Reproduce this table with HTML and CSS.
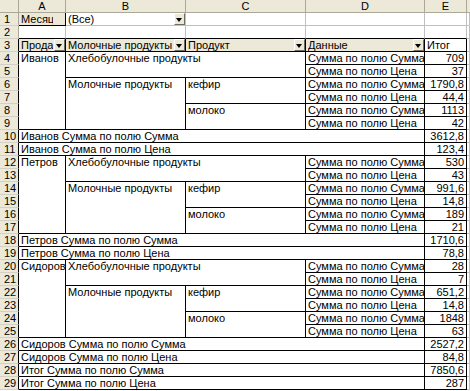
FILE: index.html
```html
<!DOCTYPE html>
<html lang="ru">
<head>
<meta charset="utf-8">
<title>Сводная таблица</title>
<link rel="stylesheet" href="styles.css">
</head>
<body>
<table class="sheet">
<colgroup><col class="w-h"><col class="w-a"><col class="w-b"><col class="w-c"><col class="w-d"><col class="w-e"><col class="w-f"></colgroup>
<tr class="colhdr"><th class="corner"></th><th>A</th><th>B</th><th>C</th><th>D</th><th>E</th><th class="cut"></th></tr>
<tr><th class="rh">1</th><td class="fbtn"><span class="lbl">Месяц</span></td><td class="page"><span class="lbl">(Все)</span><span class="dd"></span></td><td></td><td></td><td></td><td></td></tr>
<tr><th class="rh">2</th><td class="top"></td><td class="top"></td><td class="top"></td><td class="top"></td><td class="top"></td><td></td></tr>
<tr><th class="rh pv">3</th><td class="fbtn hb"><span class="lbl">Продавец</span><span class="dd"></span></td><td class="fbtn hb"><span class="lbl">Молочные продукты</span><span class="dd"></span></td><td class="fbtn hb"><span class="lbl">Продукт</span><span class="dd"></span></td><td class="fbtn hb"><span class="lbl">Данные</span><span class="dd"></span></td><td class="p hb">Итог</td><td></td></tr>

<tr><th class="rh pv">4</th><td class="p grp" rowspan="6">Иванов</td><td class="p grp" rowspan="2" colspan="2">Хлебобулочные продукты</td><td class="p d1">Сумма по полю Сумма</td><td class="p n d1">709</td><td></td></tr>
<tr><th class="rh pv">5</th><td class="p">Сумма по полю Цена</td><td class="p n">37</td><td></td></tr>
<tr><th class="rh pv">6</th><td class="p grp" rowspan="4">Молочные продукты</td><td class="p grp" rowspan="2">кефир</td><td class="p d1">Сумма по полю Сумма</td><td class="p n d1">1790,8</td><td></td></tr>
<tr><th class="rh pv">7</th><td class="p">Сумма по полю Цена</td><td class="p n">44,4</td><td></td></tr>
<tr><th class="rh pv">8</th><td class="p grp" rowspan="2">молоко</td><td class="p d1">Сумма по полю Сумма</td><td class="p n d1">1113</td><td></td></tr>
<tr><th class="rh pv">9</th><td class="p">Сумма по полю Цена</td><td class="p n">42</td><td></td></tr>
<tr><th class="rh pv">10</th><td class="p" colspan="4">Иванов Сумма по полю Сумма</td><td class="p n">3612,8</td><td></td></tr>
<tr><th class="rh pv">11</th><td class="p" colspan="4">Иванов Сумма по полю Цена</td><td class="p n">123,4</td><td></td></tr>

<tr><th class="rh pv">12</th><td class="p grp" rowspan="6">Петров</td><td class="p grp" rowspan="2" colspan="2">Хлебобулочные продукты</td><td class="p d1">Сумма по полю Сумма</td><td class="p n d1">530</td><td></td></tr>
<tr><th class="rh pv">13</th><td class="p">Сумма по полю Цена</td><td class="p n">43</td><td></td></tr>
<tr><th class="rh pv">14</th><td class="p grp" rowspan="4">Молочные продукты</td><td class="p grp" rowspan="2">кефир</td><td class="p d1">Сумма по полю Сумма</td><td class="p n d1">991,6</td><td></td></tr>
<tr><th class="rh pv">15</th><td class="p">Сумма по полю Цена</td><td class="p n">14,8</td><td></td></tr>
<tr><th class="rh pv">16</th><td class="p grp" rowspan="2">молоко</td><td class="p d1">Сумма по полю Сумма</td><td class="p n d1">189</td><td></td></tr>
<tr><th class="rh pv">17</th><td class="p">Сумма по полю Цена</td><td class="p n">21</td><td></td></tr>
<tr><th class="rh pv">18</th><td class="p" colspan="4">Петров Сумма по полю Сумма</td><td class="p n">1710,6</td><td></td></tr>
<tr><th class="rh pv">19</th><td class="p" colspan="4">Петров Сумма по полю Цена</td><td class="p n">78,8</td><td></td></tr>

<tr><th class="rh pv">20</th><td class="p grp" rowspan="6">Сидоров</td><td class="p grp" rowspan="2" colspan="2">Хлебобулочные продукты</td><td class="p d1">Сумма по полю Сумма</td><td class="p n d1">28</td><td></td></tr>
<tr><th class="rh pv">21</th><td class="p">Сумма по полю Цена</td><td class="p n">7</td><td></td></tr>
<tr><th class="rh pv">22</th><td class="p grp" rowspan="4">Молочные продукты</td><td class="p grp" rowspan="2">кефир</td><td class="p d1">Сумма по полю Сумма</td><td class="p n d1">651,2</td><td></td></tr>
<tr><th class="rh pv">23</th><td class="p">Сумма по полю Цена</td><td class="p n">14,8</td><td></td></tr>
<tr><th class="rh pv">24</th><td class="p grp" rowspan="2">молоко</td><td class="p d1">Сумма по полю Сумма</td><td class="p n d1">1848</td><td></td></tr>
<tr><th class="rh pv">25</th><td class="p">Сумма по полю Цена</td><td class="p n">63</td><td></td></tr>
<tr><th class="rh pv">26</th><td class="p" colspan="4">Сидоров Сумма по полю Сумма</td><td class="p n">2527,2</td><td></td></tr>
<tr><th class="rh pv">27</th><td class="p" colspan="4">Сидоров Сумма по полю Цена</td><td class="p n">84,8</td><td></td></tr>
<tr><th class="rh pv">28</th><td class="p" colspan="4">Итог Сумма по полю Сумма</td><td class="p n">7850,6</td><td></td></tr>
<tr><th class="rh pv">29</th><td class="p" colspan="4">Итог Сумма по полю Цена</td><td class="p n">287</td><td></td></tr>
</table>
</body>
</html>
```

FILE: styles.css
```css
html, body {
  margin: 0;
  padding: 0;
  background: #ffffff;
}

.sheet {
  border-collapse: separate;
  border-spacing: 0;
  table-layout: fixed;
  width: 470px;
  font-family: "Liberation Sans", Arial, sans-serif;
  font-size: 11px;
  color: #000;
}

.w-h { width: 19px; }
.w-a { width: 47px; }
.w-b { width: 120px; }
.w-c { width: 120px; }
.w-d { width: 119px; }
.w-e { width: 42px; }
.w-f { width: 3px; }

.sheet td,
.sheet th {
  box-sizing: border-box;
  height: 13px;
  padding: 0 1px 0 2px;
  line-height: 12px;
  white-space: nowrap;
  overflow: hidden;
  text-align: left;
  vertical-align: bottom;
  font-weight: normal;
  border-right: 1px solid #c0c0c0;
  border-bottom: 1px solid #c0c0c0;
}

/* column and row headers */
.colhdr th {
  background: #ece9d8;
  text-align: center;
  border-right: 1px solid #aca899;
  border-bottom: 1px solid #aca899;
  padding: 0;
}
.colhdr th.cut { border-right: none; }

.sheet th.rh {
  background: #ece9d8;
  text-align: left;
  padding-left: 4px;
  border-right: 1px solid #aca899;
  border-bottom: 1px solid #d4d0c8;
}
.sheet th.rh.pv { border-right-color: #000; }

/* pivot area */
.sheet td.top { border-bottom-color: #000; }

.sheet td.p {
  background: #fff;
  border-right-color: #000;
  border-bottom-color: #000;
}
.sheet td.grp { vertical-align: top; }
.sheet td.d1 { border-bottom-color: #000; }
.sheet td.n { text-align: right; padding-right: 2px; }

/* field buttons */
.sheet td.fbtn {
  background: #ece9d8;
  border-right-color: #000;
  border-bottom-color: #000;
  padding: 0 0 0 2px;
}
.fbtn, .page { position: relative; }
.lbl { display: block; overflow: hidden; }
.fbtn .lbl { margin-right: 12px; }
.sheet td.hb { border-bottom-color: #000; }

.page .lbl { margin-right: 12px; }

.dd {
  position: absolute;
  right: 0;
  top: 0;
  width: 11px;
  height: 12px;
  box-sizing: border-box;
  background: #ece9d8;
  border-top: 1px solid #fff;
  border-left: 1px solid #fff;
  border-right: 1px solid #716f64;
  border-bottom: 1px solid #716f64;
}
.dd::after {
  content: "";
  position: absolute;
  left: 1px;
  top: 4px;
  border-left: 3.5px solid transparent;
  border-right: 3.5px solid transparent;
  border-top: 4px solid #000;
}
```
